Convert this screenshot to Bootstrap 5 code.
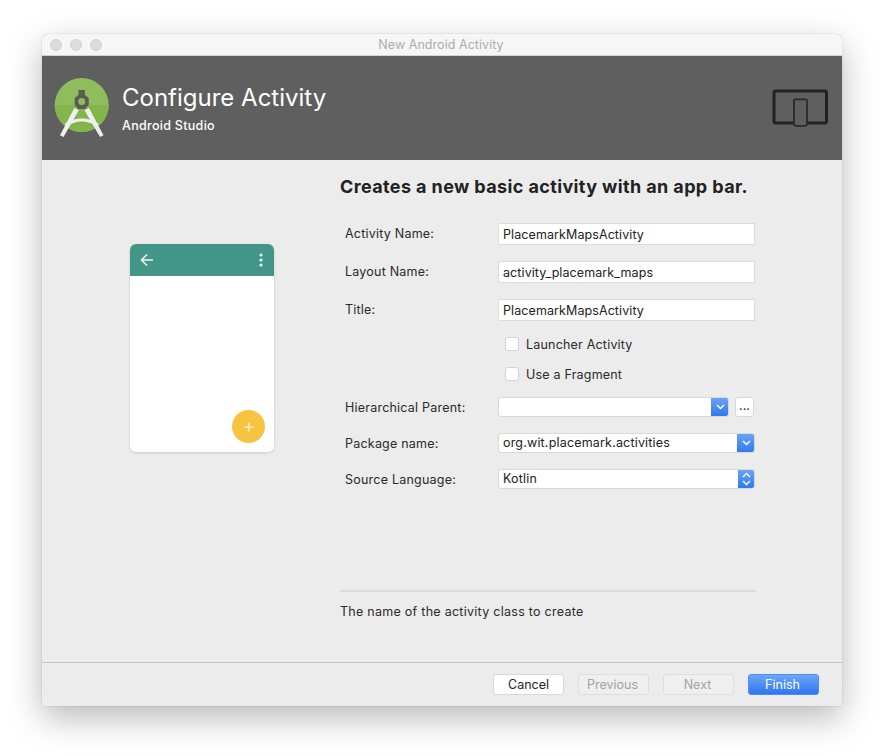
<!DOCTYPE html>
<html lang="en">
<head>
<meta charset="utf-8">
<title>New Android Activity</title>
<link rel="stylesheet" href="https://cdn.jsdelivr.net/npm/bootstrap@5.3.0/dist/css/bootstrap.min.css">
<style>
html,body{height:100%}
body{background:#fff;font-family:Inter,"Liberation Sans",sans-serif;font-size:12.5px;color:#2a2a2a;padding:34px 42px 50px;overflow:hidden}
.win{width:800px;height:672px;background:#ececec;border-radius:6px 6px 0 0;box-shadow:0 0 1px rgba(0,0,0,.45),0 12px 34px rgba(0,0,0,.28);overflow:hidden}
.tbar{height:22px;background:#f6f6f6;border-bottom:1px solid #d4d4d4;position:relative}
.dot{width:12px;height:12px;border-radius:50%;background:#dcdcdc;border:1px solid #d3d3d3}
.tname{font-size:12.5px;letter-spacing:.05px;color:#adadad;line-height:21px;left:-2px;right:0}
.banner{height:104px;background:#5f5f5f;color:#fff;padding-left:10px;padding-right:14px}
.btext{margin-left:10px;padding-top:2px;padding-bottom:2px}
.bt1{font-size:24px;line-height:30px}
.bt2{font-size:12.5px;font-weight:500;letter-spacing:.3px;line-height:16px;margin-top:5px}
.devs{margin-right:-2px;margin-top:-2px}
.main{height:502px}
.leftp{width:298px;padding-left:88px;padding-top:84px}
.phone{width:144px;height:208px;background:#fff;border-radius:6px;box-shadow:0 1px 3px rgba(0,0,0,.14);position:relative;overflow:hidden}
.pbar{height:32px;background:#419688;padding:0 10px}
.fab{position:absolute;right:9px;bottom:9px;width:33px;height:33px;border-radius:50%;background:#f7c442}
.rightp{width:416px;padding-top:16px}
.head{font-size:18px;font-weight:700;letter-spacing:.38px;line-height:22px;color:#222;margin-bottom:25px}
.frow{height:22px;margin-bottom:16px;padding-left:5px}
.frow3{margin-bottom:13px}
.flabel{width:153px;flex:none;line-height:22px;letter-spacing:.22px}
.tinput{width:257px;height:22px;background:#fff;border:1px solid #dcdcdc;padding:0 4px;line-height:21px;font-size:12.5px;letter-spacing:.09px;color:#222}
.crow{height:20px;margin-left:165px;margin-bottom:10px;gap:7px;line-height:20px;letter-spacing:.2px;padding-top:2px}
.crow2{margin-bottom:13px}
.cbox{width:14px;height:14px;background:#fff;border:1px solid #d4d4d4;border-radius:3px;flex:none;margin-top:-2px}
.combo{width:257px;height:20px;background:#fff;border:1px solid #d8d8d8;border-radius:3px;padding-left:4px;line-height:18px;letter-spacing:.18px;overflow:hidden;color:#222}
.comboh{width:231px}
.cbtn{width:18px;height:20px;margin:-1px -1px -1px auto;background:linear-gradient(#6ba6f8,#2f76f0);border-radius:0 3px 3px 0;flex:none}
.cbtn2{width:17px}
.dots{width:19px;height:20px;background:#fff;border:1px solid #d8d8d8;border-radius:3px;margin-left:6px;line-height:15px;text-align:center;flex:none}
.sel{margin-bottom:16px;padding-left:5px;height:20px}
.lights{padding-top:5px;padding-left:8px;column-gap:8px}
.spacer{height:85px}
.rule{height:2px;background:#dcdcdc;margin-bottom:12px}
.help{line-height:16px;letter-spacing:.27px}
.foot{height:44px;border-top:1px solid #c4c4c4;padding-top:11px;padding-right:23px;gap:14px}
.mbtn{width:71px;height:21px;border-radius:3px;font-size:12.5px;line-height:19px;text-align:center;background:#fff;border:1px solid #d8d8d8;color:#222}
.mbtn.off{background:#efefef;border-color:#dedede;color:#a3a3a3;padding-right:2px}
.mbtn.go{background:linear-gradient(#6ba6f8,#2f76f0);border-color:#4f8cf3;color:#fff;padding-right:2px}
</style>
</head>
<body>
<div class="win d-flex flex-column">
  <div class="tbar">
    <div class="tname position-absolute text-center">New Android Activity</div>
    <div class="lights d-flex position-relative">
      <span class="dot"></span><span class="dot"></span><span class="dot"></span>
    </div>
  </div>
  <div class="banner d-flex align-items-center">
    <svg width="60" height="64" viewBox="52 76 60 64" class="flex-shrink-0" aria-hidden="true">
      <circle cx="81.700" cy="105" r="27" fill="#8fbd5c"/>
      <path d="M54.700 105a27 27 0 0 0 54 0z" fill="#82b64d"/>
      <path d="M74.300 108l4.500 2.300L63.500 137l-3.500-1.700zM89 108l-4.500 2.300L100 137l3.500-1.700z" fill="#efefef"/>
      <path d="M65.500 125Q82 115 98 125" stroke="#efefef" stroke-width="3.200" fill="none"/>
      <path d="M78.500 90h6.400v5l3.800 3v7l-3.800 4h-6.400l-3.800-4v-7l3.800-3z" fill="#5a5a5a"/>
      <circle cx="81.700" cy="101.500" r="3.500" fill="#8fbd5c"/>
    </svg>
    <div class="btext">
      <div class="bt1">Configure Activity</div>
      <div class="bt2">Android Studio</div>
    </div>
    <svg class="devs ms-auto flex-shrink-0" width="58" height="40" viewBox="772 87 58 40" aria-hidden="true">
      <rect x="774" y="91" width="52.500" height="32" rx="1.500" fill="none" stroke="#222" stroke-width="3"/>
      <rect x="794" y="99.300" width="13" height="26.500" rx="1.500" fill="#5f5f5f" stroke="#2a2a2a" stroke-width="1.800"/>
    </svg>
  </div>
  <div class="main d-flex">
    <div class="leftp flex-shrink-0">
      <div class="phone">
        <div class="pbar d-flex align-items-center justify-content-between">
          <svg width="14" height="14" viewBox="0 0 14 14" aria-hidden="true"><path d="M13 7H2M7 1.500 1.500 7 7 12.500" stroke="#eef6f4" stroke-width="1.600" fill="none"/></svg>
          <svg width="6" height="14" viewBox="0 0 6 14" aria-hidden="true"><circle cx="3" cy="2" r="1.600" fill="#eef6f4"/><circle cx="3" cy="7" r="1.600" fill="#eef6f4"/><circle cx="3" cy="12" r="1.600" fill="#eef6f4"/></svg>
        </div>
        <div class="fab d-flex align-items-center justify-content-center">
          <svg width="10" height="10" viewBox="0 0 10 10" aria-hidden="true"><path d="M5 .5v9M.5 5h9" stroke="#fff" stroke-width="1.100"/></svg>
        </div>
      </div>
    </div>
    <div class="rightp">
      <div class="head">Creates a new basic activity with an app bar.</div>
      <div class="frow d-flex"><div class="flabel">Activity Name:</div><div class="tinput">PlacemarkMapsActivity</div></div>
      <div class="frow d-flex"><div class="flabel">Layout Name:</div><div class="tinput">activity_placemark_maps</div></div>
      <div class="frow frow3 d-flex"><div class="flabel">Title:</div><div class="tinput">PlacemarkMapsActivity</div></div>
      <div class="crow d-flex align-items-center"><span class="cbox"></span><span>Launcher Activity</span></div>
      <div class="crow crow2 d-flex align-items-center"><span class="cbox"></span><span>Use a Fragment</span></div>
      <div class="sel d-flex"><div class="flabel">Hierarchical Parent:</div>
        <div class="combo comboh d-flex"><span></span><span class="cbtn d-flex align-items-center justify-content-center"><svg width="9" height="6" viewBox="0 0 9 6" aria-hidden="true"><path d="M1 1l3.500 3.500L8 1" stroke="#fff" stroke-width="1.500" fill="none"/></svg></span></div>
        <div class="dots">...</div>
      </div>
      <div class="sel d-flex"><div class="flabel">Package name:</div>
        <div class="combo d-flex"><span>org.wit.placemark.activities</span><span class="cbtn d-flex align-items-center justify-content-center"><svg width="9" height="6" viewBox="0 0 9 6" aria-hidden="true"><path d="M1 1l3.500 3.500L8 1" stroke="#fff" stroke-width="1.500" fill="none"/></svg></span></div>
      </div>
      <div class="sel d-flex"><div class="flabel">Source Language:</div>
        <div class="combo d-flex"><span>Kotlin</span><span class="cbtn cbtn2 d-flex align-items-center justify-content-center"><svg width="9" height="14" viewBox="0 0 9 14" aria-hidden="true"><path d="M1 5l3.500-3.500L8 5M1 9l3.500 3.500L8 9" stroke="#fff" stroke-width="1.400" fill="none"/></svg></span></div>
      </div>
      <div class="spacer"></div>
      <div class="rule"></div>
      <div class="help">The name of the activity class to create</div>
    </div>
  </div>
  <div class="foot d-flex justify-content-end">
    <div class="mbtn">Cancel</div>
    <div class="mbtn off">Previous</div>
    <div class="mbtn off">Next</div>
    <div class="mbtn go">Finish</div>
  </div>
</div>
</body>
</html>
